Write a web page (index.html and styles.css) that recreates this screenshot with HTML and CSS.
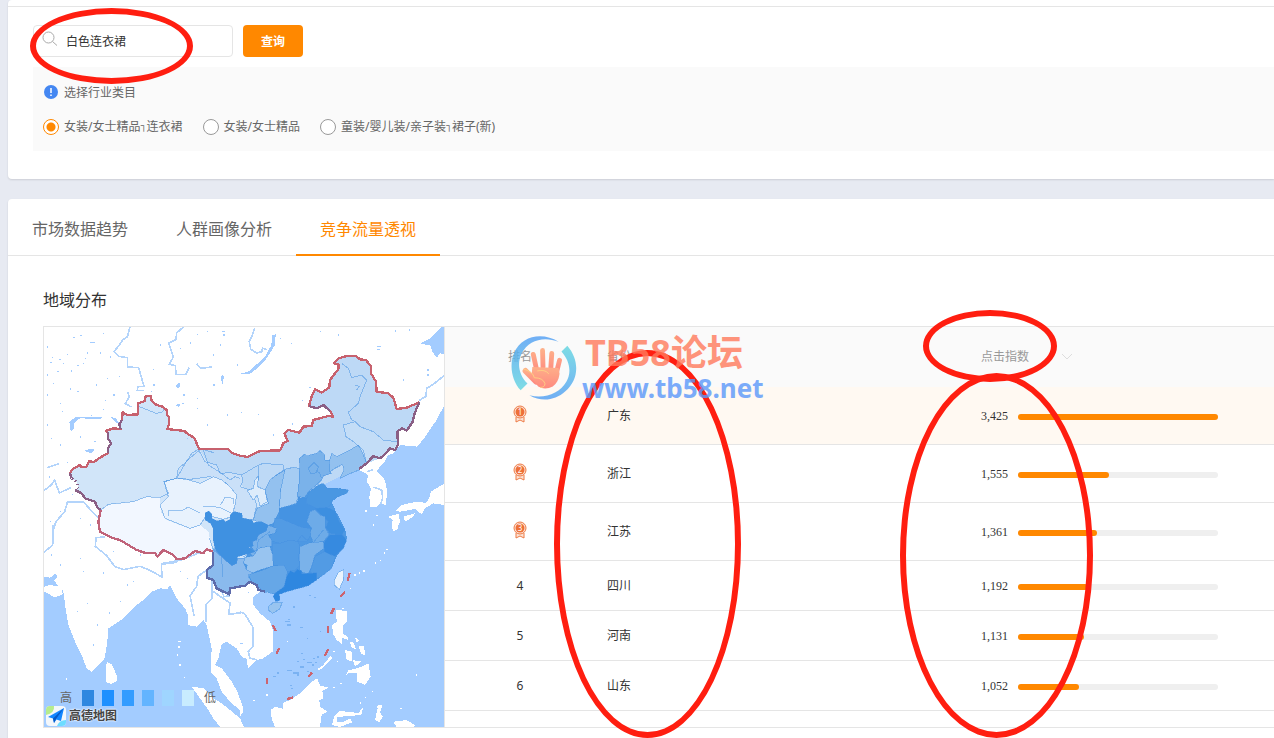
FILE: index.html
```html
<!DOCTYPE html>
<html lang="zh-CN">
<head>
  <meta charset="UTF-8" />
  <meta name="viewport" content="width=device-width, initial-scale=1" />
  <title>竞争流量透视</title>
  <link rel="stylesheet" href="styles.css">
</head>
<body>

  <section class="card search-card">
    <form class="search-form">
      <div class="search-box">
        <svg class="search-icon" viewBox="0 0 16 16"><circle cx="6.5" cy="6.5" r="5.5"/><path d="M10.5 10.5l4.500 4"/></svg>
        <input type="text" aria-label="关键词" value="白色连衣裙">
      </div>
      <button type="button">查询</button>
    </form>

    <div class="category">
      <div class="category-title">
        <svg class="info-icon" viewBox="0 0 14 14"><circle cx="7" cy="7" r="7" fill="#4487f2"/><path d="M7 3v5M7 9.500v1.500" stroke="#fff" stroke-width="1.500"/></svg>
        <span>选择行业类目</span>
      </div>
      <div class="category-list">
        <label><input type="radio" name="cat" checked>女装/女士精品<i class="sep">┐</i>连衣裙</label>
        <label><input type="radio" name="cat">女装/女士精品</label>
        <label><input type="radio" name="cat">童装/婴儿装/亲子装<i class="sep">┐</i>裙子(新)</label>
      </div>
    </div>
  </section>

  <section class="card">
    <nav class="tabs">
      <a href="#trend">市场数据趋势</a>
      <a href="#crowd">人群画像分析</a>
      <a href="#flow" class="active">竞争流量透视</a>
    </nav>

    <div class="content">
      <h2>地域分布</h2>
      <div class="region">
        <div class="map">
          <svg class="map-svg" viewBox="12 6 1200 1200" preserveAspectRatio="none">
            <rect x="12" y="6" width="1200" height="1200" fill="#a3ccff"/>

            <!-- land -->
            <g fill="#fff">
              <path d="M12 6H1205L1190 20L1170 40L1140 55L1172 62L1176 78L1190 98L1200 85L1212 88V245L1200 265L1190 285L1172 310L1152 340L1132 365L1100 362L1080 360L1060 385L1045 390L1035 408L1020 425L1010 438L1028 455L1036 470L1042 500L1037 540L1020 536L1010 545L990 545L988 515L993 490L980 470L985 450L968 440L957 435L920 450L900 460L912 436L908 418L885 430L870 450L845 460L852 480L870 495L900 490L925 495L900 512L875 530L888 560L902 585L915 612L921 640L905 670L890 695L875 730L830 765L780 785L715 805L720 825L705 825L700 805L660 800L640 815L640 840L660 865L690 890L700 920L698 980L670 1000L650 1005L623 1032L622 1003L605 995L590 970L560 950L545 958L535 1000L525 1020L545 1030L575 1070L592 1100L610 1150L600 1156L570 1130L545 1100L530 1060L512 1040L515 970L500 900L490 885L470 905L443 900L444 870L435 850L410 820L390 780L382 792L360 790L335 800L310 825L290 840L250 880L205 910L202 950L194 1000L180 1015L155 1040L140 1030L125 990L105 950L85 900L75 840L72 810L65 785L68 808L45 817L12 800Z"/>
              <path d="M197 1020L202 1012L215 1018L230 1050L230 1068L212 1077L197 1070Z"/>
              <path d="M455 1085L490 1090L520 1120L545 1135L570 1155L600 1180L612 1206H540L520 1180L505 1155L480 1120Z"/>
              <path d="M12 796V770L20 782Z"/>
            </g>
            <g fill="#fff" transform="translate(600 600)">
              <path d="M92 555L105 545L130 552L130 533L150 525L180 505L205 482L215 470L232 460L240 482L265 488L247 498L250 520L238 525L240 545L262 560L245 570L240 606H105L95 580Z"/>
              <path d="M288 255L322 258L322 290L310 300L308 325L322 335L325 345L305 338L306 358L290 345L278 325L277 300L290 290Z"/>
              <path d="M315 375L335 380L335 408L320 405ZM345 338L358 345L350 352ZM355 365L372 362L375 390L365 388ZM338 405L365 410L345 424ZM330 350L342 354L348 374L334 366Z"/>
              <path d="M315 455L325 435L345 432L365 425L385 415L392 455L375 480L352 470L350 445L325 445Z"/>
              <path d="M232 432L250 420L272 392L276 400L255 422L238 436Z"/>
              <path d="M276 600L282 575L300 558L355 564L370 545L364 570L290 576L292 592L312 590L330 580L336 592L300 606Z"/>
              <path d="M405 585L415 540L428 540L420 562L428 575L418 592Z"/>
              <path d="M460 590L500 585L525 600L520 606H470ZM0 533L8 545L10 560L0 575ZM455 0H475V12L460 18Z"/>
            </g>
            <g fill="#fff" transform="translate(600 0)">
              <path d="M445 575L475 566L480 590L470 613H455L458 585Z"/>
              <path d="M468 558L485 540L530 530L558 534L570 515L572 500L605 480L612 478V540L580 535L555 550L545 568L525 552L480 560Z"/>
              <path d="M490 575L525 565L520 575L495 590Z"/>
            </g>

            <!-- lakes and inlets -->
            <g fill="#a3ccff">
              <path d="M697 30L707 28L705 60L690 85L672 110L655 128L628 148L605 148L630 136L650 118L675 95L694 60Z"/>
              <path d="M12 755L30 758L48 745L52 758L42 765L55 785L30 780L12 785Z"/>
              <path d="M92 320L88 290L110 275L185 277L182 282L120 280L104 292L100 314Z"/>
              <path d="M136 376L150 371L166 374L154 383L140 382ZM408 180L420 172L418 190L410 188ZM545 150L552 152L548 178L543 165ZM404 240L420 236L418 246Z"/>
              <path d="M212 276L228 280L238 296L228 292Z"/>
            </g>

            <!-- rivers -->
            <g class="river">
              <path d="M270 6L262 36L248 44L240 58L222 80L236 94L262 98L262 126L296 128L312 184L294 184L292 196L312 196"/>
              <path d="M430 6L410 24L408 44L386 54L400 96L388 118L406 122L408 148L438 148L448 128M470 116L482 130L516 126"/>
              <path d="M262 200L268 214L256 236L274 246M12 496L32 482L44 466L58 504L92 488M20 428L56 416"/>
              <path d="M40 614L48 590L74 560L82 532L130 530L160 564L190 592L224 598V614"/>
              <path d="M40 600L38 660L12 682M196 636L168 638L166 664L200 692L224 724L250 734L300 724L330 736L366 756L364 718L410 712"/>
              <path d="M364 716L420 706L462 690L490 678M500 735L474 754L470 784L450 812L462 872M518 700L516 820L498 838V890M520 800L570 834L566 868L612 862M545 800L552 815L570 812"/>
              <path d="M600 860L615 868L638 905L640 962L625 980L630 1000L650 1004"/>
              <path d="M644 10L636 32L628 50L632 72L650 84L665 80L668 70L680 74M1212 152L1182 176L1160 190L1158 214L1138 226M1000 486L1026 496L1028 520L1022 536M980 440L1000 434"/>
            </g>

            <!-- provinces -->
            <g>
              <path fill="#d1e5f9" d="M90 445L98 432L120 420L125 427L140 425L148 408L160 412L180 398L203 385L204 370L213 355L204 340L203 322L197 318L220 310L242 312L238 298L246 285L248 262L262 270L294 268V235L315 228L317 213H332L335 228L350 240L368 245L380 255L382 270L387 277L386 300L382 312L433 318L445 328L462 338L478 372L565 373L578 385L600 392L622 396L660 378L720 376L730 355L743 348L733 325L745 315L778 323L790 305L815 303L820 285L865 273L880 275L870 258L850 240L830 250L807 243L815 215L825 193L845 203L868 187L870 165L885 145L895 133V118L882 115L895 100L920 93H948L960 103L978 105L992 123L993 145L1008 170L1010 200L1045 205L1060 218L1070 252L1100 248L1138 232L1125 262L1118 290L1100 317L1085 310L1072 320L1074 360L1065 375L1050 370L1020 400L1000 393L980 415L957 432L920 450L900 460L912 436L908 418L885 430L870 450L845 460L852 480L870 495L900 490L925 495L900 512L875 530L888 560L902 585L915 612L921 640L905 670L890 695L875 730L830 765L780 785L715 805L720 825L705 825L700 805L675 800L655 795L650 780L630 770L615 782L570 790L568 808L530 790L520 765L500 758V735L520 720L518 680L500 672L490 685L465 678L435 700L410 703L400 690L370 675L352 695L345 683L320 685L290 675L240 645L215 638L180 620L175 590L182 555L172 548L165 530L135 520L125 505L105 495L115 490L110 470L95 460Z"/>
              <path fill="#bdd9f6" d="M478 372L565 373L578 385L600 392L622 396L660 378L720 376L730 355L743 348L733 325L745 315L778 323L790 305L815 303L820 285L865 273L880 275L870 258L850 240L830 250L807 243L815 215L825 193L845 203L868 187L870 165L885 145L895 133V118L882 115L895 100L920 93H948L960 103L978 105L992 123L993 145L1008 170L1010 200L1045 205L1060 218L1070 252L1100 248L1138 232L1125 262L1118 290L1100 317L1085 310L1072 320L1074 360L1050 372L1020 400L980 415L870 470L760 520L700 530L620 500L590 460L540 455L500 410Z"/>
              <path fill="#c3ddf7" d="M910 300L945 290L960 305L1000 320L1030 345L1070 350L1074 360L1050 372L1020 400L1000 393L980 415L970 390L955 360L940 350L920 335Z"/>
              <path fill="#f2f7ff" d="M185 555L200 540L230 535L280 530L320 515L360 515L362 560L380 585L450 612L480 600L505 620L518 680L500 672L490 685L465 678L435 700L410 703L400 690L370 675L352 695L345 683L320 685L290 675L240 645L215 638L180 620L175 590Z"/>
              <path fill="#4d98e3" d="M660 580L720 550L775 530L800 500L870 495L900 490L925 495L900 512L875 530L888 560L902 585L915 612L921 640L905 670L890 695L875 730L830 765L780 785L715 805L660 790L620 760L610 720Z"/>
            </g>
            <g class="prov" transform="translate(450 345)">
              <path fill="#cae0f8" d="M25 28L45 65L80 75L90 100L120 98L155 105L158 125L150 140L185 152L200 195L190 240L158 235L125 220L130 190L135 170L110 130L60 110L0 118L-40 115L-35 85L-10 65L5 40Z"/>
              <path fill="#e8f2fd" d="M-78 125L-40 115L-10 118L30 130L70 110L95 120L120 140L140 165L135 195L125 230L100 238L50 225L30 255L0 265L-75 235L-90 195L-65 170Z"/>
              <path fill="#ddecfb" d="M172 152L190 145L195 120L205 108L203 140L225 150L232 185L210 198L202 165L190 180Z"/>
              <path fill="#93c1ef" d="M240 120L255 108L285 90L280 125L272 150L268 215L250 250L235 256L190 240L200 205L235 190L225 150Z"/>
              <path fill="#a5ccf3" d="M285 88L310 82L328 85L330 110L322 170L320 190L295 198L268 205L272 150Z"/>
              <path fill="#7ab2ea" d="M328 55L345 42L350 48L380 40L390 32L405 45L404 60L422 60L420 95L424 100L400 108L395 120L385 130L355 155L345 172L322 170L330 110Z"/>
              <path fill="#93c1ef" d="M418 65L425 40L440 50L480 30L505 15L520 45L530 70L507 90L470 105L450 115L462 91L458 73L435 85L420 95Z"/>
              <path fill="#4a97e2" d="M345 195L350 175L358 155L385 135L400 130L412 145L440 145L475 150L470 160L430 175L422 195L410 205L378 208Z"/>
              <path fill="#4593e2" d="M268 205L320 195L325 172L350 175L348 190L380 205L360 215L367 235L350 245L362 265L330 262L270 235Z"/>
              <path fill="#3d8fe0" d="M375 205L410 202L435 212L448 245L465 270L455 285L420 280L407 262L415 245L400 232Z"/>
              <path fill="#6dabe8" d="M360 215L375 208L390 225L405 230L405 260L418 285L400 305L370 308L358 280L365 265L350 245Z"/>
              <path fill="#529be4" d="M255 235L270 235L335 262L360 265L362 285L350 305L325 305L300 300L270 310L235 300L240 285L260 275L250 260Z"/>
              <path fill="#7ab2ea" d="M235 256L260 265L255 280L235 285L245 300L245 318L205 325L190 350L175 335L195 335L185 322L190 300L205 285L228 272Z"/>
              <path fill="#368ae0" d="M418 285L455 282L470 300L460 325L435 350L405 345L400 310Z"/>
              <path fill="#529be4" d="M246 310L270 310L300 300L325 305L330 325L325 355L330 375L315 390L290 395L280 375L250 378L248 345Z"/>
              <path fill="#7ab2ea" d="M330 320L360 308L400 305L402 325L375 345L365 380L355 402L330 395L328 350Z"/>
              <path fill="#529be4" d="M375 350L402 335L436 350L425 385L400 405L382 415L360 395Z"/>
              <path fill="#98c4f0" d="M158 370L165 352L190 348L205 325L240 318L248 345L250 378L215 388L185 400L168 392L172 375Z"/>
              <path fill="#8abaed" d="M72 325L85 340L112 365L125 376L140 370L142 355L165 355L160 368L170 390L190 400L175 410L185 425L165 437L120 445L118 463L80 445L70 420L50 413V390L68 375Z"/>
              <path fill="#66a7e7" d="M175 405L220 390L248 378L282 375L292 395L285 440L255 462L220 455L200 435L185 425Z"/>
              <path fill="#2e87e0" d="M290 410L300 392L312 397L322 388L335 392L335 402L380 398L380 420L355 437L290 455L268 463L270 480L258 485L250 470L255 460L282 440Z"/>
              <path fill="#3f91e1" d="M45 220L55 213L65 222L66 235L80 243L100 238L105 247L120 238L122 222L135 215L155 220L158 235L185 240L190 248L215 245L235 256L228 272L205 285L200 300L185 305L190 318L175 322L195 335L160 345L142 350L140 370L125 376L112 365L85 340L75 325L70 300L70 265L62 250L45 240Z"/>
              <path fill="#98c4f0" d="M235 500L250 487L277 488L268 508L248 520L237 512Z"/>
              <path fill="#eaf3fd" stroke="none" d="M433 420L445 397L462 388L460 420L448 448L433 435Z"/>
              <path fill="none" d="M355 85L372 68L385 80L380 98L362 102ZM378 92L388 98L395 115M322 305L335 285L350 300M370 308L400 270M205 120L206 75L220 70L280 75L282 90L255 108M155 105L205 75M40 198L90 202L125 220M92 195L105 172L130 175L132 192M58 295L70 330L95 350L98 410M160 350L200 330L205 300L240 275"/>
            </g>
            <g class="prov" fill="none">
              <path d="M182 555L205 538L280 530L320 515L360 518L385 505L372 470L410 460L440 408L475 378M490 375L505 420L545 445L570 465L585 455L600 460M496 376L522 383M298 245L348 265L366 262L375 250M385 572V556L424 558L445 546L480 564M910 300L945 290L960 305L1000 320L1030 345L1070 350M910 300L918 335L940 350L970 375L980 415M905 115L925 130L935 158L965 150L980 165L962 210L955 235L925 262L935 285L945 290M945 180L958 185L950 195"/>
            </g>

            <!-- borders -->
            <g fill="none" stroke-width="7" stroke-linejoin="round">
              <path stroke="#c7616e" d="M90 445L98 432L120 420L125 427L140 425L148 408L160 412L180 398L203 385L204 370L213 355L204 340L203 322L197 318L220 310L242 312L238 298L246 285L248 262L262 270L294 268V235L315 228L317 213H332L335 228L350 240L368 245L380 255L382 270L387 277L386 300L382 312L433 318L445 328L462 338L478 372L565 373L578 385L600 392L622 396L660 378L720 376L730 355L743 348L733 325L745 315L778 323L790 305L815 303L820 285L865 273L880 275L870 258L850 240L830 250L807 243L815 215L825 193L845 203L868 187L870 165L885 145L895 133V118L882 115L895 100L920 93H948L960 103L978 105L992 123L993 145L1008 170L1010 200L1045 205L1060 218L1070 252L1100 248L1138 232"/>
              <path stroke="#8a5f85" d="M1138 232L1125 262L1118 290L1100 317L1085 310L1072 320L1074 360L1065 375L1050 370L1035 388L1020 400L1000 393L980 415L957 432M807 243L830 250L850 240L870 258M242 312L238 298L246 285M203 385L204 370L213 355L204 340L203 322M90 445L95 460M105 495L125 505L135 520L165 530L172 548L182 555"/>
              <path stroke="#8a5f85" stroke-dasharray="5 7" d="M95 460L110 470L115 490"/>
              <path stroke="#c0637a" d="M182 555L175 590L180 620L215 638L240 645L290 675L320 685L345 683L352 695L370 675L400 690L410 703L435 700L465 678L490 685L500 672L518 680"/>
              <path stroke="#5d6bab" d="M518 680L520 720L500 735V758L520 765L530 790L550 800L568 808L570 790L615 782L630 770L650 780L655 795L675 800"/>
              <path stroke="#cc6470" d="M929 744L923 767M915 801L900 815M882 849L873 867M864 903V923M864 972L855 993M816 1042L805 1056M759 1117L741 1122M681 1059V1077M717 969L710 987M698 901L708 918"/>
            </g>

            <!-- small lakes and islets -->
            <g class="dots">
              <path d="M20 66h3M36 98h4M30 112h5M58 104h4M68 116h4M50 140h6M80 88h4M100 38h4M120 32h5M150 52h14M140 84h3M134 100h5M128 116h4M112 122h4M92 138h3M180 84h3M190 26h3M210 96h4M200 160h3M168 180h4M236 154h3M90 192h3M22 210h3M60 236h3M194 226h3M220 210h4M152 272h4M190 254h3M66 260h3M40 176h3M112 200h4M20 150h3M34 340h3M60 360h3M20 300h4M120 336h3M162 350h6M80 412h4M26 456h3M96 508h4M60 560h3M30 590h3M120 580h3M150 600h4"/>
              <path d="M340 134h3M360 60h3M334 200h3M420 70h3M450 54h3M470 28h3M500 20h4M540 60h3M545 20h10M548 30h6M604 146h8M590 120h3M520 180h4M430 210h4M426 236h5M470 250h3M500 300h3M560 270h3M470 220h3M440 340h3M340 180h4M520 90h3M720 40h3M752 55h3M894 30h4M840 20h3M1010 65h12M1012 74h8M1064 18h3M1106 15h3M1090 165h3M1160 135h6M1162 150h4M806 187h6M785 226h5M654 268h3M604 262h3M755 297h3M700 330h3"/>
              <path d="M120 700h3M130 740h3M188 744h3M220 680h3M260 780h3M300 690h3M340 800h3M140 836h3M206 864h3M170 900h3M110 860h3M240 830h4M160 960h3M280 770h3M60 720h3M32 690h3M420 740h3M440 760h3M400 710h3M625 802h3M600 955h10M640 1030h4"/>
            </g>
            <g class="isles">
              <path d="M808 812h5M823 818h6M736 890h14M740 900h12M744 884h6M780 908h10M840 920h4M802 940h3M760 846h4M770 1010h8M784 986h6M800 1012h16M790 1004h5M820 1000h5M832 996h6M780 1026h12M740 1036h16M760 1044h16M800 1040h8M700 1054h8M712 1044h6M750 1082h5M752 1090h6M770 1050h8M815 1020h7M826 1012h5"/>
            </g>
            <g class="reefs">
              <path d="M1004 714h5M1020 706h4M1032 684h4M1038 674h5M970 738h4M956 744h4M942 750h5M1000 600h3M678 1110h6M640 1126h5M1128 1050h4M996 1100h4M976 1118h3M960 1134h4M415 950h8M415 966h6M410 990h5M418 1020h4M432 1058h4M78 1062h4M930 790h4M905 850h7M1010 1146h6M1016 1156h6M740 950h3M880 980h4M890 1010h4M900 1075h5M880 1088h6M975 558h6M1008 572h5M1080 1150h5"/>
            </g>
          </svg>
          <div class="legend">
            <span class="legend-text">高</span>
            <i class="lv1"></i><i class="lv2"></i><i class="lv3"></i><i class="lv4"></i><i class="lv5"></i><i class="lv6"></i>
            <span class="legend-text">低</span>
          </div>
          <div class="amap">
            <svg viewBox="0 0 20 20"><rect width="20" height="20" rx="4" fill="#f3f7fb"/><path d="M0 8V4Q0 0 4 0H8Q9 7 0 9Z" fill="#b6ec8d"/><path d="M11 20Q13 14 20 14V16Q20 20 16 20Z" fill="#6edcff"/><path d="M18 2L2 11L7 12.500L8 17L10.500 13.500L15 15Z" fill="#1286ff"/><path d="M18 2L7 12.500L8 17L10 13Z" fill="#0658c4"/></svg>
            <span>高德地图</span>
          </div>
        </div>

        <table class="rank">
          <thead>
            <tr>
              <th class="col-rank">排名</th>
              <th class="col-name">省份</th>
              <th>点击指数<svg class="sort" viewBox="0 0 12 8"><path d="M1 1l5 5 5-5"/></svg></th>
            </tr>
          </thead>
          <tbody>
            <tr class="top first">
              <td class="col-rank"><svg class="medal" viewBox="0 0 14 18"><path class="ribbon" d="M3 12V17L7 15L11 17V12"/><circle class="ring" cx="7" cy="7" r="6"/><circle class="disc" cx="7" cy="7" r="4.500"/><text x="7" y="10">1</text></svg></td>
              <td>广东</td>
              <td><div class="index"><span>3,425</span><div class="bar"><div style="width:100%"></div></div></div></td>
            </tr>
            <tr class="top">
              <td class="col-rank"><svg class="medal" viewBox="0 0 14 18"><path class="ribbon" d="M3 12V17L7 15L11 17V12"/><circle class="ring" cx="7" cy="7" r="6"/><circle class="disc" cx="7" cy="7" r="4.500"/><text x="7" y="10">2</text></svg></td>
              <td>浙江</td>
              <td><div class="index"><span>1,555</span><div class="bar"><div style="width:45.4%"></div></div></div></td>
            </tr>
            <tr class="top">
              <td class="col-rank"><svg class="medal" viewBox="0 0 14 18"><path class="ribbon" d="M3 12V17L7 15L11 17V12"/><circle class="ring" cx="7" cy="7" r="6"/><circle class="disc" cx="7" cy="7" r="4.500"/><text x="7" y="10">3</text></svg></td>
              <td>江苏</td>
              <td><div class="index"><span>1,361</span><div class="bar"><div style="width:39.7%"></div></div></div></td>
            </tr>
            <tr>
              <td class="col-rank">4</td>
              <td>四川</td>
              <td><div class="index"><span>1,192</span><div class="bar"><div style="width:34.8%"></div></div></div></td>
            </tr>
            <tr>
              <td class="col-rank">5</td>
              <td>河南</td>
              <td><div class="index"><span>1,131</span><div class="bar"><div style="width:33%"></div></div></div></td>
            </tr>
            <tr>
              <td class="col-rank">6</td>
              <td>山东</td>
              <td><div class="index"><span>1,052</span><div class="bar"><div style="width:30.7%"></div></div></div></td>
            </tr>
          </tbody>
        </table>
      </div>
    </div>
  </section>

  <!-- red marks -->
  <div class="mark mark-keyword"></div>
  <div class="mark mark-head"></div>
  <div class="mark mark-province"></div>
  <div class="mark mark-index"></div>

  <div class="watermark">
    <svg viewBox="0 0 70 70">
      <defs>
        <linearGradient id="ringL" x1="0" y1="0" x2="0" y2="1"><stop offset="0" stop-color="#4f9df5"/><stop offset="1" stop-color="#5fd6e0"/></linearGradient>
        <linearGradient id="ringR" x1="0" y1="0" x2="0" y2="1"><stop offset="0" stop-color="#5fd6e0"/><stop offset="1" stop-color="#4f9df5"/></linearGradient>
        <linearGradient id="palm" x1="0" y1="0" x2="0" y2="1"><stop offset="0" stop-color="#ff9d6e"/><stop offset="1" stop-color="#ff6f62"/></linearGradient>
      </defs>
      <path fill="url(#ringL)" d="M50 7C34 -3 12 0 4 19C-1 32 2 47 11 57L18 50C9 41 7 29 12 19C19 5 35 1 50 7Z"/>
      <path fill="url(#ringR)" d="M59 11C72 26 71 46 57 58C46 68 32 69 20 62C36 66 51 60 58 48C64 38 61 26 53 17Z"/>
      <g stroke="url(#palm)" stroke-linecap="round" fill="none">
        <path stroke-width="5" d="M27 34L24 20M34 33L33.500 16M42 34L43 19M48 38L51 26"/>
        <path stroke-width="6" d="M27 48L16 37"/>
      </g>
      <path fill="url(#palm)" d="M23 33L50 34L51 40Q50 49 44 53Q36 57 29 53L22 44Z"/>
      <path fill="none" stroke="#ffc466" d="M14 35Q24 38 25 44Q34 44 36 50Q36 54 31 54M28 37Q36 35 40 40"/>
    </svg>
    <div class="watermark-text">
      <strong>TB58论坛</strong>
      <span>www.tb58.net</span>
    </div>
  </div>

</body>
</html>
```

FILE: styles.css
```css
* {
  box-sizing: border-box;
}

body {
  position: relative;
  margin: 0;
  padding-left: 8px;
  background: #e7eaf2;
  color: #333;
  font-family: "Noto Sans", "Noto Sans CJK SC", sans-serif;
  font-size: 12px;
  line-height: 18px;
}

.card {
  background: #fff;
  border-radius: 4px 0 0 4px;
  box-shadow: 0 1px 2px rgba(0, 0, 0, 0.12);
  margin-bottom: 20px;
}

.card:last-of-type {
  margin-bottom: 0;
}

.search-card {
  padding: 6px 0 28px;
}

.search-form {
  display: flex;
  gap: 10px;
  padding: 18px 25px 10px;
  border-top: 1px solid #e5e5e5;
}

.search-box {
  display: flex;
  width: 200px;
  height: 32px;
  border: 1px solid #e5e5e5;
  border-radius: 4px;
  padding: 0 8px;
}

.search-icon {
  width: 16px;
  height: 16px;
  margin-top: 5px;
  fill: none;
  stroke: #aaa;
}

.search-box input {
  flex: 1;
  min-width: 0;
  border: none;
  outline: none;
  padding: 2px 8px 0;
  background: none;
  color: #333;
  font: inherit;
}

.search-form button {
  width: 60px;
  height: 32px;
  border: none;
  border-radius: 4px;
  padding: 2px 0 0;
  background: #ff8800;
  color: #fff;
  font: inherit;
  font-weight: bold;
}

.category {
  margin-left: 25px;
  padding: 17px 10px 15px;
  background: #fafafa;
  color: #666;
}

.category-title {
  display: flex;
  align-items: flex-start;
  gap: 6px;
  margin-bottom: 16px;
  padding-left: 1px;
}

.info-icon {
  width: 14px;
  height: 14px;
  margin-top: 1px;
}

.category-list {
  display: flex;
  gap: 20px;
}

.category-list label {
  display: flex;
  align-items: center;
}

.category-list input {
  appearance: none;
  width: 16px;
  height: 16px;
  margin: 0 5px 0 0;
  border: 1px solid #999;
  border-radius: 50%;
  background: #fff;
}

.category-list input:checked {
  border-color: #ff8800;
  background: radial-gradient(circle, #ff8800 4px, #fff 5px);
}

.sep {
  font-family: "Liberation Mono", monospace;
  font-style: normal;
  font-size: 10px;
}

.tabs {
  display: flex;
  height: 57px;
  border-bottom: 1px solid #e5e5e5;
}

.tabs a {
  height: 57px;
  padding: 0 24px;
  border-bottom: 2px solid transparent;
  color: #666;
  font-size: 16px;
  line-height: 60px;
  text-decoration: none;
}

.tabs a.active {
  border-bottom-color: #ff8800;
  color: #ff8800;
}

.content {
  padding: 32px 0 20px 35px;
}

h2 {
  margin: 0 0 14px;
  font-size: 16px;
  font-weight: normal;
  line-height: 24px;
}

.region {
  display: flex;
  align-items: stretch;
  border: 1px solid #e5e5e5;
  border-right: none;
}

.map {
  position: relative;
  flex: none;
  width: 401px;
  border-right: 1px solid #e5e5e5;
}

.map-svg {
  display: block;
  width: 100%;
  aspect-ratio: 1;
  shape-rendering: crispEdges;
}

.river {
  fill: none;
  stroke: #b3d4fb;
  stroke-width: 5;
}

.prov path {
  stroke: rgba(70, 145, 225, 0.5);
  stroke-width: 3;
  stroke-linejoin: round;
}

.dots {
  stroke: #a3ccff;
  stroke-width: 4;
}

.isles {
  stroke: #7ab2f2;
  stroke-width: 4;
}

.reefs {
  stroke: #fff;
  stroke-width: 4;
}

.legend {
  position: absolute;
  left: 16px;
  bottom: 20px;
  display: flex;
  align-items: center;
  gap: 8px;
  color: #666;
}

.legend i {
  width: 12px;
  height: 16px;
}

.legend .lv1 { background: #2e87e0; margin-left: 2px; }
.legend .lv2 { background: #1e90ff; }
.legend .lv3 { background: #339cff; }
.legend .lv4 { background: #63b4ff; }
.legend .lv5 { background: #9fd5ff; }
.legend .lv6 { background: #c8ecff; margin-right: 2px; }

.amap {
  position: absolute;
  left: 2px;
  bottom: 1px;
  display: flex;
  align-items: center;
  gap: 3px;
  color: #444;
  font-weight: bold;
  line-height: 20px;
  text-shadow: 0 0 2px #fff, 0 0 2px #fff;
}

.amap svg {
  width: 20px;
  height: 20px;
}

.rank {
  flex: 1;
  align-self: flex-start;
  border-collapse: separate;
  border-spacing: 0;
  table-layout: fixed;
}

.rank th {
  height: 60px;
  padding: 0 12px;
  background: #fafafa;
  color: #999;
  font-weight: normal;
  text-align: left;
}

.rank td {
  height: 50px;
  padding: 0 12px;
  border-bottom: 1px solid #e5e5e5;
}

.rank th:last-child,
.rank td:last-child {
  padding-left: 13px;
}

.rank .top td {
  height: 58px;
}

.rank .first td {
  background: #fff9f2;
}

.rank .col-rank {
  width: 150px;
  text-align: center;
}

.rank .col-name {
  width: 45%;
}

.sort {
  width: 12px;
  height: 8px;
  margin-left: 32px;
  fill: none;
  stroke: #ddd;
}

.medal {
  display: block;
  width: 14px;
  height: 18px;
  margin: 0 auto 4px;
}

.ribbon,
.ring {
  fill: #fbe3d6;
  stroke: #ee7a45;
}

.disc {
  fill: #ee7038;
}

.medal text {
  fill: #fff;
  font-size: 8px;
  text-anchor: middle;
}

.index {
  display: flex;
  align-items: center;
  gap: 10px;
  font-family: "Liberation Serif", serif;
}

.bar {
  width: 200px;
  height: 6px;
  margin-top: 2px;
  border-radius: 3px;
  background: #efefef;
}

.bar div {
  height: 6px;
  border-radius: 3px;
  background: #ff8800;
}

.mark {
  position: absolute;
  border: 6px solid #ff1e10;
  border-radius: 50%;
  pointer-events: none;
}

.mark-keyword {
  left: 30px;
  top: 8px;
  width: 163px;
  height: 76px;
}

.mark-head {
  left: 923px;
  top: 310px;
  width: 134px;
  height: 72px;
}

.mark-province {
  left: 554px;
  top: 350px;
  width: 187px;
  height: 388px;
}

.mark-index {
  left: 900px;
  top: 373px;
  width: 193px;
  height: 365px;
}

.watermark {
  position: absolute;
  left: 509px;
  top: 335px;
  display: flex;
  gap: 3px;
  opacity: 0.8;
  pointer-events: none;
}

.watermark svg {
  width: 70px;
  height: 68px;
}

.watermark-text {
  display: flex;
  flex-direction: column;
}

.watermark strong {
  padding-left: 3px;
  color: #ff7a5c;
  font-size: 36px;
  font-weight: 700;
  line-height: 36px;
}

.watermark span {
  color: #5b98fa;
  font-size: 26px;
  font-weight: 700;
  line-height: 34px;
}
```
